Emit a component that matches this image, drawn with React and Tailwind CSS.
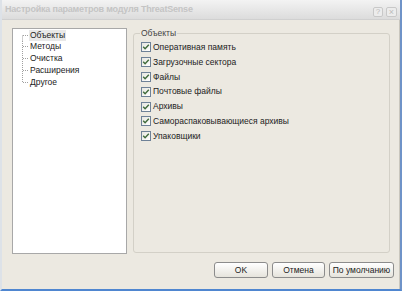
import React from 'react';

const treeItems = ['Объекты', 'Методы', 'Очистка', 'Расширения', 'Другое'];

const checks = [
  'Оперативная память',
  'Загрузочные сектора',
  'Файлы',
  'Почтовые файлы',
  'Архивы',
  'Самораспаковывающиеся архивы',
  'Упаковщики',
];

const TreeLines = ({ first, last }) => (
  <svg width="7" height="11.25" className="shrink-0" viewBox="0 0 7 11.25">
    <line
      x1="0.5"
      y1={first ? 5.5 : 0}
      x2="0.5"
      y2={last ? 5.5 : 11.25}
      stroke="#a0a0a0"
      strokeWidth="1"
      strokeDasharray="1 1"
    />
    <line x1="1" y1="5.5" x2="7" y2="5.5" stroke="#a0a0a0" strokeWidth="1" strokeDasharray="1 1" />
  </svg>
);

const CheckBox = () => (
  <div className="w-[10px] h-[10px] border border-[#6e8197] bg-gradient-to-br from-[#e6e6e0] to-white flex items-center justify-center shrink-0">
    <svg width="8" height="8" viewBox="0 0 8 8">
      <path d="M1.2 3.8 L3.1 5.8 L6.8 1.8" fill="none" stroke="#3f6a3a" strokeWidth="1.4" />
    </svg>
  </div>
);

const Btn = ({ w, children }) => (
  <button
    className={`${w} h-[16px] rounded-[3px] border border-[#8c8c8c] bg-gradient-to-b from-white to-[#e6e4dc] text-[8.5px] text-[#222] flex items-center justify-center`}
  >
    {children}
  </button>
);

export default function App() {
  return (
    <div
      className="w-[406px] h-[294px] bg-white overflow-hidden"
      style={{ fontFamily: '"Liberation Sans", Arial, sans-serif' }}
    >
      <div className="w-[402px] h-[291px] flex flex-col bg-[#ece9e1] border-l-2 border-l-[#dde2e8] border-r-2 border-r-[#6f93c8] border-b-2 border-b-[#4f86d0]">
        {/* title bar */}
        <div className="h-[20px] flex items-center pl-[3px] pr-[3px] bg-gradient-to-b from-[#f3f3f3] to-[#dcdcdc] border-b border-[#d0d0d0]">
          <span className="text-[9px] font-bold text-[#c4c4c4] whitespace-nowrap tracking-[-0.2px]">
            Настройка параметров модуля ThreatSense
          </span>
          <div className="ml-auto flex gap-[3px] mt-[4px]">
            <div className="w-[10px] h-[10px] rounded-[2px] border border-[#c8c8c8] bg-[#ececec] text-[8px] leading-[8px] text-[#bbb] flex items-center justify-center">?</div>
            <div className="w-[11px] h-[10px] rounded-[2px] border border-[#c8c8c8] bg-[#ececec] text-[9px] leading-[8px] text-[#bbb] flex items-center justify-center">×</div>
          </div>
        </div>

        {/* body */}
        <div className="flex-1 flex flex-col pt-[8px] pl-[10px] pr-[8px] border-r border-[#c9c6bd]">
          <div className="flex gap-[6px] h-[226px]">
            <div className="w-[115px] h-full bg-white border border-[#a8a8a8] pl-[9px] text-[8.5px] text-[#222]">
              {treeItems.map((t, i) => (
                <div key={t} className="flex items-center h-[11.25px] mt-[0.5px]">
                  <TreeLines first={i === 0} last={i === treeItems.length - 1} />
                  <span className={`px-[1px] leading-[11px] ${i === 0 ? 'bg-[#e8e8e8]' : ''}`}>{t}</span>
                </div>
              ))}
            </div>

            <fieldset className="flex-1 h-[225px] border border-[#d3d0c7] rounded-[3px] pl-[7px] mr-[1px]">
              <legend className="ml-[-1px] px-[1px] text-[8.5px] leading-[10px] text-[#444]">Объекты</legend>
              <div className="pt-[2px]">
                {checks.map((c) => (
                  <div key={c} className="flex items-center h-[14.8px]">
                    <CheckBox />
                    <span className="ml-[2px] text-[8.5px] text-[#222] whitespace-nowrap">{c}</span>
                  </div>
                ))}
              </div>
            </fieldset>
          </div>

          <div className="flex justify-end gap-[4px] mt-[8px] mr-[-3px]">
            <Btn w="w-[54px]">OK</Btn>
            <Btn w="w-[53px]">Отмена</Btn>
            <Btn w="w-[65px]">По умолчанию</Btn>
          </div>
        </div>
      </div>
    </div>
  );
}
